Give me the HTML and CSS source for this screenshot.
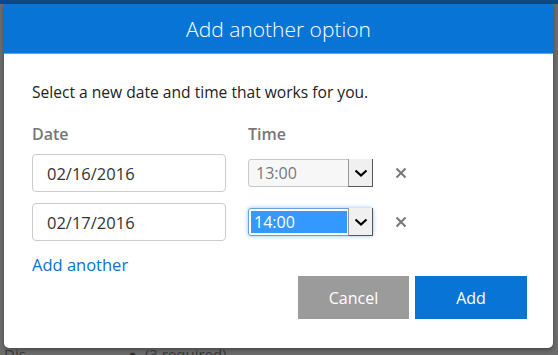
FILE: index.html
```html
<!DOCTYPE html>
<html>
<head>
  <meta charset="UTF-8">
  <title>Add another option</title>
  <link rel="stylesheet" href="styles.css">
</head>
<body>
  <div class="topbar"></div>

  <div class="page">
    <div class="dialog">
      <div class="dialog-header">
        <h1>Add another option</h1>
      </div>

      <div class="dialog-body">
        <p class="intro">Select a new date and time that works for you.</p>

        <div class="grid">
          <span class="label">Date</span>
          <span class="label">Time</span>
          <span></span>

          <input class="date-input" type="text" value="02/16/2016">
          <div class="time-select disabled">
            <span class="time-value">13:00</span>
            <span class="drop">
              <svg viewBox="0 0 14 10"><path d="M1.5 2.5 L7 7.5 L12.5 2.5" fill="none" stroke="#000" stroke-width="2.2"/></svg>
            </span>
          </div>
          <span class="remove">
            <svg viewBox="0 0 12 12"><path d="M1.5 1.5 L10.5 10.5 M10.5 1.5 L1.5 10.5" stroke="#777" stroke-width="2"/></svg>
          </span>

          <input class="date-input" type="text" value="02/17/2016">
          <div class="time-select focused">
            <span class="time-value"><span class="selected">14:00</span></span>
            <span class="drop">
              <svg viewBox="0 0 14 10"><path d="M1.5 2.5 L7 7.5 L12.5 2.5" fill="none" stroke="#000" stroke-width="2.2"/></svg>
            </span>
          </div>
          <span class="remove">
            <svg viewBox="0 0 12 12"><path d="M1.5 1.5 L10.5 10.5 M10.5 1.5 L1.5 10.5" stroke="#777" stroke-width="2"/></svg>
          </span>
        </div>

        <a class="add-link" href="#">Add another</a>

        <div class="actions">
          <button class="btn cancel">Cancel</button>
          <button class="btn primary">Add</button>
        </div>
      </div>
    </div>

    <div class="behind">
      <span class="behind-left">Dis</span>
      <span class="behind-right">&#9679;&nbsp;&nbsp;(3 required)</span>
    </div>
  </div>
</body>
</html>
```

FILE: styles.css
```css
html, body {
  margin: 0;
  padding: 0;
  height: 100%;
  overflow: hidden;
}

body {
  background: #6c6c6c;
  font-family: "Open Sans", "Noto Sans", sans-serif;
  color: #222;
}

.topbar {
  height: 4px;
  background: #0b4a86;
}

.page {
  padding: 0 5px 0 4px;
}

.dialog {
  background: white;
  border-radius: 0 0 5px 5px;
  box-shadow: 0 2px 4px rgba(0,0,0,0.35);
}

.dialog-header {
  background: #0875d6;
  height: 49px;
  border-bottom: 1px solid #5ba4e6;
  display: flex;
  align-items: center;
  justify-content: center;
}

.dialog-header h1 {
  margin: 0;
  color: white;
  font-size: 21px;
  font-weight: 300;
}

.dialog-body {
  padding: 27px 26px 29px 28px;
}

.intro {
  margin: 0 0 21px;
  font-size: 15.6px;
}

.grid {
  display: grid;
  grid-template-columns: 194px 125px 40px;
  column-gap: 22px;
  row-gap: 11px;
  align-items: center;
}

.label {
  font-size: 16px;
  font-weight: 600;
  color: #777;
  line-height: 20px;
  margin-bottom: -1px;
}

.date-input {
  box-sizing: border-box;
  width: 194px;
  height: 38px;
  border: 1px solid #ccc;
  border-radius: 4px;
  padding: 0 14px;
  font-family: inherit;
  font-size: 16.5px;
  color: #333;
  background: white;
}

.time-select {
  box-sizing: border-box;
  width: 125px;
  height: 28px;
  display: flex;
  border: 1px solid #c8c8c8;
  border-radius: 3px;
  background: #f7f7f7;
  font-size: 16px;
}

.time-value {
  flex: 1;
  display: flex;
  align-items: center;
  padding-left: 7px;
  color: #777;
}

.time-select.focused {
  background: white;
  border-color: #66a3dd;
  box-shadow: 0 0 4px rgba(80,150,230,0.6);
}

.time-select.focused .time-value {
  padding: 2px 1px 2px 2px;
}

.selected {
  display: flex;
  align-items: center;
  height: 100%;
  width: 100%;
  background: #3399ff;
  color: white;
  padding-left: 3px;
}

.drop {
  width: 23px;
  display: flex;
  align-items: center;
  justify-content: center;
  background: #f0f0f0;
  border-left: 1px solid #999;
  border-right: 1px solid #555;
  border-bottom: 1px solid #555;
  margin: -1px -1px -1px 0;
}

.drop svg {
  width: 14px;
  height: 10px;
}

.remove {
  display: flex;
}

.remove svg {
  width: 12px;
  height: 12px;
}

.add-link {
  display: inline-block;
  margin-top: 12px;
  color: #0a72cf;
  text-decoration: none;
  font-size: 16.5px;
}

.actions {
  display: flex;
  justify-content: flex-end;
  gap: 6px;
}

.btn {
  width: 111px;
  height: 43px;
  border: none;
  color: white;
  font-family: inherit;
  font-size: 16px;
}

.btn.cancel {
  background: #9b9b9b;
}

.btn.primary {
  background: #0875d6;
  width: 112px;
}

.behind {
  display: flex;
  font-size: 15px;
  color: #222;
  line-height: 12px;
  opacity: 0.7;
}

.behind-left {
  width: 124px;
}
```
